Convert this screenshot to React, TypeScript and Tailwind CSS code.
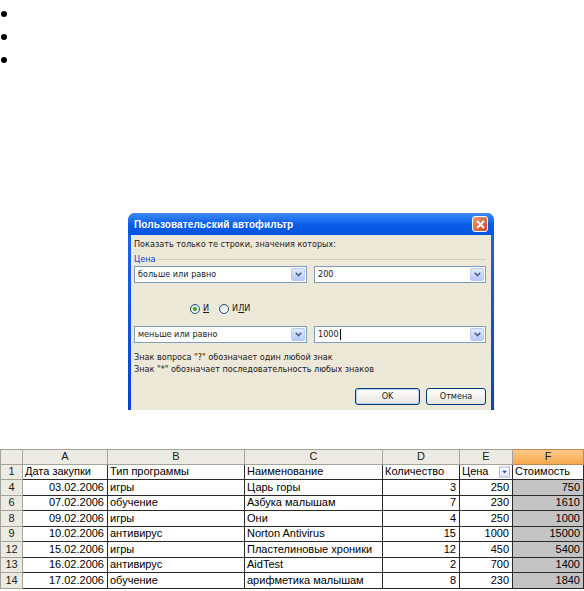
import React from 'react';

const rows = [
  { n: '4', date: '03.02.2006', type: 'игры', name: 'Царь горы', qty: '3', price: '250', cost: '750' },
  { n: '6', date: '07.02.2006', type: 'обучение', name: 'Азбука малышам', qty: '7', price: '230', cost: '1610' },
  { n: '8', date: '09.02.2006', type: 'игры', name: 'Они', qty: '4', price: '250', cost: '1000' },
  { n: '9', date: '10.02.2006', type: 'антивирус', name: 'Norton Antivirus', qty: '15', price: '1000', cost: '15000' },
  { n: '12', date: '15.02.2006', type: 'игры', name: 'Пластелиновые хроники', qty: '12', price: '450', cost: '5400' },
  { n: '13', date: '16.02.2006', type: 'антивирус', name: 'AidTest', qty: '2', price: '700', cost: '1400' },
  { n: '14', date: '17.02.2006', type: 'обучение', name: 'арифметика малышам', qty: '8', price: '230', cost: '1840' },
];

function Combo({ value, caret, className }: { value: string; caret?: boolean; className: string }) {
  return (
    <div className={`flex h-[17px] items-center border border-[#7f9db9] bg-white ${className}`}>
      <span className="flex flex-1 items-center pl-[3px] text-[9px] leading-none text-[#1a1a1a]">
        {value}
        {caret && <span className="ml-px inline-block h-[11px] w-px bg-black" />}
      </span>
      <span className="mr-px flex h-[13px] w-[14px] items-center justify-center rounded-[2px] border border-[#b7c9f4] bg-gradient-to-b from-[#e3ebfd] to-[#b5c8fa]">
        <svg width="7" height="5" viewBox="0 0 7 5">
          <path d="M0.7 0.7 L3.5 3.5 L6.3 0.7" stroke="#4d6185" strokeWidth="1.6" fill="none" />
        </svg>
      </span>
    </div>
  );
}

function Radio({ checked }: { checked?: boolean }) {
  return (
    <span className="flex h-[10px] w-[10px] items-center justify-center rounded-full border border-[#1c5180] bg-gradient-to-br from-[#dcdcd5] to-white">
      {checked && <span className="h-[4px] w-[4px] rounded-full bg-[#2ba82b]" />}
    </span>
  );
}

function Dialog() {
  return (
    <div className="ml-[128px] mt-[142px] w-[366px] rounded-t-[7px] bg-gradient-to-b from-[#1f66f0] to-[#0a3fd2] font-['DejaVu_Sans_Condensed','DejaVu_Sans',sans-serif]">
      {/* Title bar */}
      <div className="flex h-[22px] items-center justify-between rounded-t-[7px] bg-gradient-to-b from-[#3b8af7] via-[#0b5ee8] to-[#0552e0] pl-[6px] pr-[6px]">
        <span className="font-['Liberation_Sans',Arial,sans-serif] text-[10px] font-bold tracking-[0.1px] text-white">Пользовательский автофильтр</span>
        <span className="flex h-[16px] w-[16px] items-center justify-center rounded-[3px] border border-white bg-gradient-to-br from-[#e89a7c] to-[#c8441c]">
          <svg width="9" height="9" viewBox="0 0 9 9">
            <path d="M1 1 L8 8 M8 1 L1 8" stroke="white" strokeWidth="1.8" />
          </svg>
        </span>
      </div>
      {/* Body */}
      <div className="mx-[3px] mb-[3px] bg-[#ece9d8] pl-[3px] pr-[5px] pb-[5px] pt-[3px] text-[9px] text-[#1a1a1a]">
        <div className="flex h-[14px] items-center">Показать только те строки, значения которых:</div>
        <div className="mt-px flex h-[13px] items-center gap-[2px]">
          <span className="text-[#0046d5]">Цена</span>
          <span className="h-[2px] flex-1 border-t border-[#d0d0bf] border-b-white" />
        </div>
        <div className="flex gap-[7px]">
          <Combo value="больше или равно" className="w-[173px]" />
          <Combo value="200" className="flex-1" />
        </div>
        <div className="mt-[19px] flex h-[14px] items-center pl-[56px]">
          <Radio checked />
          <span className="ml-[3px]"><span className="underline">И</span></span>
          <span className="ml-[10px]"><Radio /></span>
          <span className="ml-[3px]">И<span className="underline">Л</span>И</span>
        </div>
        <div className="mt-[10px] flex gap-[7px]">
          <Combo value="меньше или равно" className="w-[173px]" />
          <Combo value="1000" caret className="flex-1" />
        </div>
        <div className="mt-[9px] flex h-[12px] items-center">Знак вопроса "?" обозначает один любой знак</div>
        <div className="flex h-[12px] items-center">Знак "*" обозначает последовательность любых знаков</div>
        <div className="mt-[12px] flex justify-end gap-[6px]">
          <button className="flex h-[17px] w-[65px] items-center justify-center rounded-[3px] border border-[#003c74] bg-gradient-to-b from-white to-[#e6e5de] text-[9px] shadow-[inset_0_0_0_1px_#b3cdf5]">
            OK
          </button>
          <button className="flex h-[17px] w-[60px] items-center justify-center rounded-[3px] border border-[#003c74] bg-gradient-to-b from-white to-[#e6e5de] text-[9px]">
            Отмена
          </button>
        </div>
      </div>
    </div>
  );
}

const head = 'flex items-center justify-center border-r border-b border-[#a3a39a] bg-[#ecebe3] text-[#202020]';
const cell = 'flex items-center overflow-hidden whitespace-nowrap border-r border-b border-[#2a2a2a] px-[2px]';

function Sheet() {
  return (
    <div className="mt-[39px] grid grid-cols-[23px_85px_137px_138px_77px_53px_71px] auto-rows-[15.5px] font-['Liberation_Sans',Arial,sans-serif] text-[11px] leading-none text-black">
      <div className={`${head} border-t border-l`} />
      <div className={`${head} border-t`}>A</div>
      <div className={`${head} border-t`}>B</div>
      <div className={`${head} border-t`}>C</div>
      <div className={`${head} border-t`}>D</div>
      <div className={`${head} border-t`}>E</div>
      <div className="flex items-center justify-center border-r border-b border-t border-[#b98a4f] bg-gradient-to-b from-[#fcc98a] to-[#f7a84d] text-[#202020]">F</div>

      <div className={`${head} border-l`}>1</div>
      <div className={cell}>Дата закупки</div>
      <div className={cell}>Тип программы</div>
      <div className={cell}>Наименование</div>
      <div className={cell}>Количество</div>
      <div className={`${cell} relative`}>
        Цена
        <span className="absolute right-[2px] top-1/2 flex h-[11px] w-[11px] -translate-y-1/2 items-center justify-center border border-[#a7b5d6] bg-gradient-to-b from-white to-[#dfe6f7]">
          <svg width="5" height="3" viewBox="0 0 5 3">
            <path d="M0 0 L5 0 L2.5 3 Z" fill="#2243d6" />
          </svg>
        </span>
      </div>
      <div className={`${cell} bg-white`}>Стоимость</div>

      {rows.map((r) => (
        <React.Fragment key={r.n}>
          <div className={`${head} border-l text-[#2b35c8]`}>{r.n}</div>
          <div className={`${cell} justify-end pr-[3px]`}>{r.date}</div>
          <div className={cell}>{r.type}</div>
          <div className={cell}>{r.name}</div>
          <div className={`${cell} justify-end pr-[3px]`}>{r.qty}</div>
          <div className={`${cell} justify-end pr-[3px]`}>{r.price}</div>
          <div className={`${cell} justify-end bg-[#c4c4c4] pr-[3px]`}>{r.cost}</div>
        </React.Fragment>
      ))}
    </div>
  );
}

export default function App() {
  return (
    <div className="h-[591px] w-[584px] overflow-hidden bg-white">
      <div className="pt-[2px]">
        {[0, 1, 2].map((i) => (
          <div key={i} className="flex h-[23px] items-center pl-[1px]">
            <span className="h-[6px] w-[6px] rounded-full bg-black" />
          </div>
        ))}
      </div>
      <Dialog />
      <Sheet />
    </div>
  );
}
